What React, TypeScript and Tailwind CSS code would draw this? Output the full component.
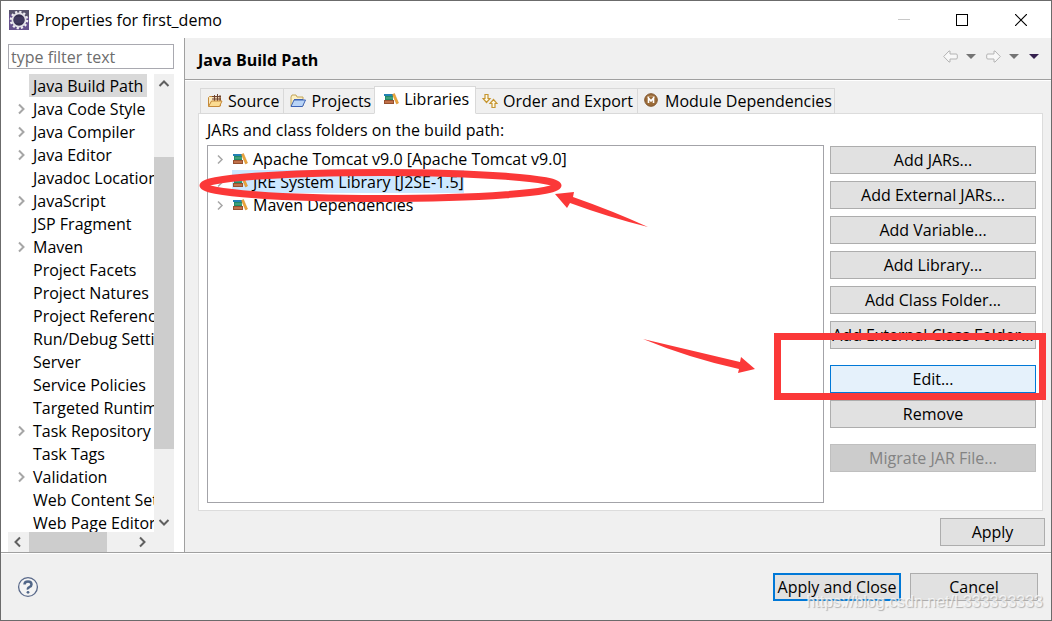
import { useState, type ReactNode } from 'react'

const categories = [
  { name: 'Java Build Path', expandable: false },
  { name: 'Java Code Style', expandable: true },
  { name: 'Java Compiler', expandable: true },
  { name: 'Java Editor', expandable: true },
  { name: 'Javadoc Location', expandable: false },
  { name: 'JavaScript', expandable: true },
  { name: 'JSP Fragment', expandable: false },
  { name: 'Maven', expandable: true },
  { name: 'Project Facets', expandable: false },
  { name: 'Project Natures', expandable: false },
  { name: 'Project References', expandable: false },
  { name: 'Run/Debug Settings', expandable: false },
  { name: 'Server', expandable: false },
  { name: 'Service Policies', expandable: false },
  { name: 'Targeted Runtimes', expandable: false },
  { name: 'Task Repository', expandable: true },
  { name: 'Task Tags', expandable: false },
  { name: 'Validation', expandable: true },
  { name: 'Web Content Settings', expandable: false },
  { name: 'Web Page Editor', expandable: false },
]

const libraries = [
  'Apache Tomcat v9.0 [Apache Tomcat v9.0]',
  'JRE System Library [J2SE-1.5]',
  'Maven Dependencies',
]

const tabs = [
  { id: 'source', name: 'Source', icon: <SourceIcon /> },
  { id: 'projects', name: 'Projects', icon: <ProjectsIcon /> },
  { id: 'libraries', name: 'Libraries', icon: <LibraryIcon /> },
  { id: 'order', name: 'Order and Export', icon: <OrderIcon /> },
  { id: 'modules', name: 'Module Dependencies', icon: <ModuleIcon /> },
]

export default function App() {
  return (
    <div className="relative flex h-screen flex-col border border-[#6b6b6b] bg-[#f0f0f0] font-['Open_Sans','Noto_Sans',sans-serif] text-[16px] leading-5 text-black">
      <TitleBar />
      <div className="flex min-h-0 flex-1 border-b border-[#a0a0a0]">
        <Sidebar />
        <main className="flex min-w-0 flex-1 flex-col border-l border-[#a0a0a0]">
          <PageHeader />
          <BuildPath />
          <div className="flex justify-end px-1.5 pt-[7px] pb-1.5">
            <PushButton className="w-[105px]">Apply</PushButton>
          </div>
        </main>
      </div>
      <Footer />
    </div>
  )
}

function TitleBar() {
  return (
    <header className="flex h-[37px] shrink-0 items-center bg-white pl-2">
      <EclipseIcon />
      <h1 className="ml-1.5 flex-1">Properties for first_demo</h1>
      <div className="flex">
        <button aria-label="Minimize" disabled className="flex h-9 w-[58px] items-center justify-center">
          <svg width="12" height="12" shapeRendering="crispEdges">
            <path d="M0 5.5h12" stroke="#c8c8c8" />
          </svg>
        </button>
        <button aria-label="Maximize" className="flex h-9 w-[58px] items-center justify-center">
          <svg width="12" height="12" shapeRendering="crispEdges">
            <rect x=".5" y=".5" width="11" height="11" fill="none" stroke="#000" />
          </svg>
        </button>
        <button aria-label="Close" className="flex h-9 w-[60px] items-center justify-center">
          <svg width="12" height="12">
            <path d="M0 0l12 12M12 0L0 12" stroke="#000" strokeWidth="1.2" />
          </svg>
        </button>
      </div>
    </header>
  )
}

function Sidebar() {
  const [selected, setSelected] = useState('Java Build Path')

  return (
    <aside className="flex w-[183px] shrink-0 flex-col bg-white pt-1.5 pr-2.5 pl-[7px]">
      <input
        type="text"
        aria-label="Filter"
        placeholder="type filter text"
        className="h-[25px] w-full border border-[#a9a9b0] px-0.5 outline-none placeholder:text-[#6d6d6d]"
      />
      <div className="mt-[5px] flex min-h-0 flex-1">
        <ul className="min-w-0 flex-1 overflow-hidden">
          {categories.map((item) => (
            <li key={item.name} className="flex h-[23px] items-center whitespace-nowrap">
              <span className="flex w-[21px] shrink-0 justify-center pl-1">
                {item.expandable && <Chevron className="text-[#a6a6a6]" />}
              </span>
              <button
                onClick={() => setSelected(item.name)}
                className={`h-[23px] px-1 ${selected === item.name ? 'bg-[#d9d9d9]' : ''}`}
              >
                {item.name}
              </button>
            </li>
          ))}
        </ul>
        <div className="flex w-5 flex-col bg-[#f0f0f0]">
          <button aria-label="Scroll up" className="flex h-5 items-center justify-center">
            <Chevron className="-rotate-90 text-[#606060]" />
          </button>
          <div className="flex flex-1 flex-col">
            <div className="grow-[15]" />
            <div className="grow-[70] bg-[#cdcdcd]" />
            <div className="grow-[15]" />
          </div>
          <button aria-label="Scroll down" className="flex h-5 items-center justify-center">
            <Chevron className="rotate-90 text-[#606060]" />
          </button>
        </div>
      </div>
      <div className="flex h-5 shrink-0 bg-[#f0f0f0] pr-[22px]">
        <button aria-label="Scroll left" className="flex w-5 items-center justify-center">
          <Chevron className="rotate-180 text-[#606060]" />
        </button>
        <div className="flex-1">
          <div className="ml-px h-full w-3/4 bg-[#cdcdcd]" />
        </div>
        <button aria-label="Scroll right" className="flex w-5 items-center justify-center">
          <Chevron className="text-[#606060]" />
        </button>
      </div>
    </aside>
  )
}

function PageHeader() {
  return (
    <div className="flex h-[42px] shrink-0 items-center border-b border-[#a0a0a0] pr-3 pl-[13px] shadow-[0_1px_0_#fff]">
      <h2 className="flex-1 pt-0.5 font-bold">Java Build Path</h2>
      <div className="flex items-center pb-1">
        <button aria-label="Back" disabled><HistoryArrow /></button>
        <button aria-label="Back history" className="ml-2"><Caret color="#747474" /></button>
        <button aria-label="Forward" disabled className="ml-2.5"><HistoryArrow className="rotate-180" /></button>
        <button aria-label="Forward history" className="ml-2"><Caret color="#747474" /></button>
        <button aria-label="Menu" className="ml-2.5"><Caret color="#35204f" /></button>
      </div>
    </div>
  )
}

function BuildPath() {
  const [activeTab, setActiveTab] = useState('libraries')
  const [selected, setSelected] = useState(libraries[1])

  return (
    <section className="flex min-h-0 flex-1 flex-col pt-1.5 pr-2 pl-[13px]">
      <div role="tablist" className="z-10 -mb-px flex h-7 items-end pl-0.5">
        {tabs.map((tab) => (
          <button
            key={tab.id}
            role="tab"
            aria-selected={activeTab === tab.id}
            onClick={() => setActiveTab(tab.id)}
            className={`flex items-center border border-[#d9d9d9] whitespace-nowrap ${
              activeTab === tab.id
                ? 'z-10 -mx-px h-7 border-b-white bg-white pr-1.5 pb-0.5 pl-2'
                : 'h-[26px] border-r-0 bg-[#f0f0f0] pr-1 pl-1.5 last:border-r last:pr-0.5'
            }`}
          >
            {tab.icon}
            <span className="ml-[5px]">{tab.name}</span>
          </button>
        ))}
      </div>
      <div className="flex min-h-0 flex-1 flex-col border border-[#dcdcdc] bg-white pt-1.5 pr-1.5 pb-[7px] pl-2">
        <p>JARs and class folders on the build path:</p>
        <div className="mt-[5px] flex min-h-0 flex-1 gap-1.5">
          <div className="relative min-w-0 flex-1 border border-[#a3a3a8] pt-px">
            <ul>
              {libraries.map((lib) => (
                <li key={lib} className="flex h-[23px] items-center pl-1.5">
                  <Chevron thin className="text-[#a6a6a6]" />
                  <button
                    onClick={() => setSelected(lib)}
                    className={`ml-1.5 flex h-[23px] items-center ${selected === lib ? 'bg-[#cce8ff]' : ''}`}
                  >
                    <LibraryIcon />
                    <span className="ml-[5px]">{lib}</span>
                  </button>
                </li>
              ))}
            </ul>
            <LibraryMark />
          </div>
          <div className="flex w-[206px] shrink-0 flex-col gap-[7px] pt-px">
            <PushButton>Add JARs...</PushButton>
            <PushButton>Add External JARs...</PushButton>
            <PushButton>Add Variable...</PushButton>
            <PushButton>Add Library...</PushButton>
            <PushButton>Add Class Folder...</PushButton>
            <PushButton>Add External Class Folder...</PushButton>
            <div className="relative mt-[9px] flex flex-col">
              <button className="h-7 border border-[#0078d7] bg-[#e5f1fb]">Edit...</button>
              <div className="pointer-events-none absolute -inset-x-14 -top-8 -right-2.5 -bottom-[7px] border-[7px] border-[#fb3838]" />
            </div>
            <PushButton>Remove</PushButton>
            <button disabled className="mt-[9px] h-7 border border-[#bfbfbf] bg-[#cccccc] text-[#838383]">
              Migrate JAR File...
            </button>
          </div>
        </div>
      </div>
    </section>
  )
}

function Footer() {
  return (
    <footer className="relative flex h-[67px] shrink-0 items-center border-t border-white pr-[13px] pl-4">
      <button aria-label="Help">
        <HelpIcon />
      </button>
      <div className="ml-auto flex gap-[9px]">
        <button className="h-7 w-32 border-2 border-[#0078d7] bg-[#e1e1e1] whitespace-nowrap">Apply and Close</button>
        <PushButton className="w-32">Cancel</PushButton>
      </div>
      <span className="pointer-events-none absolute right-2 bottom-1.5 font-['Liberation_Sans',sans-serif] text-base text-white/70 [text-shadow:1px_1px_1px_#b0b0b0]">
        https://blog.csdn.net/L333333333
      </span>
    </footer>
  )
}

function PushButton({ className = '', children }: { className?: string; children: ReactNode }) {
  return (
    <button className={`h-7 border border-[#adadad] bg-[#e1e1e1] whitespace-nowrap ${className}`}>{children}</button>
  )
}

// Red ellipse round the JRE entry, with one arrow to it and one to the Edit button
function LibraryMark() {
  return (
    <svg className="pointer-events-none absolute top-0 left-0 overflow-visible" width="560" height="240">
      <ellipse cx="172.500" cy="39.500" rx="177.500" ry="13" fill="none" stroke="#fb3838" strokeWidth="7" />
      <path d="M347 48l19-2-1 5q40 14 75 30q-40-10-78-24l-3 5z" fill="#fb3838" />
      <path d="M435 193l97 23 1-5 14 12-17 4 1-4q-50-11-96-30z" fill="#fb3838" />
    </svg>
  )
}

function Chevron({ className = '', thin = false }: { className?: string; thin?: boolean }) {
  return (
    <svg className={className} width="12" height="12" viewBox="0 0 12 12" fill="none">
      <path d={thin ? 'M4 2.5L8 6.5L4 10.5' : 'M4 1.5L8.5 6L4 10.5'} stroke="currentColor" strokeWidth={thin ? 1.5 : 2} />
    </svg>
  )
}

function Caret({ color }: { color: string }) {
  return (
    <svg width="10" height="5">
      <path d="M0 0h10L5 5z" fill={color} />
    </svg>
  )
}

function HistoryArrow({ className = '' }: { className?: string }) {
  return (
    <svg className={className} width="15" height="13" viewBox="0 0 15 13">
      <path
        d="M.7 6.5L6 1h1v3h6q1.300 0 1.300 1v3q0 1-1.300 1H7v3H6z"
        fill="#f8f8f8"
        stroke="#b4b4b4"
        strokeLinejoin="round"
      />
    </svg>
  )
}

function EclipseIcon() {
  return (
    <svg width="20" height="20" viewBox="0 0 20 20">
      <rect width="20" height="20" fill="#65518c" />
      <path d="M0 0h20v7L0 4z" fill="#57536c" />
      <circle cx="10" cy="10" r="8" fill="none" stroke="#efedf2" strokeWidth="2.500" strokeDasharray="2.200 1.990" />
      <circle cx="10" cy="10" r="6.600" fill="#352f50" stroke="#e4e2e8" strokeWidth="1.800" />
      <path d="M5 8h10M4.500 10h11M5 12h10" stroke="#564f78" strokeWidth=".7" />
    </svg>
  )
}

function SourceIcon() {
  return (
    <svg width="16" height="16" viewBox="0 0 16 16">
      <path d="M1.500 13V4.500l1-1h3l1 1h7v8.500z" fill="#fbe9bd" stroke="#c58a3a" />
      <rect x="6" y="3" width="7" height="5" fill="#ecd3b4" />
      <path d="M7.500 2v6M10.500 1v7M5 3.500h9M5 6h9M13 2v6" stroke="#70452f" />
      <path d="M1.500 13.500L4.500 8H15l-2.500 5.500z" fill="#fbdc92" stroke="#c58a3a" />
    </svg>
  )
}

function ProjectsIcon() {
  return (
    <svg width="16" height="16" viewBox="0 0 16 16">
      <path d="M1 13V4l1-2h4l1 2h6v9z" fill="#fcf0c4" stroke="#c2a458" />
      <path d="M1 13.500L4 7h11.500L12.500 13.500z" fill="#b9d4f6" stroke="#3d62b4" />
      <path d="M4 6.500h9" stroke="#3d62b4" />
    </svg>
  )
}

function LibraryIcon() {
  return (
    <svg className="shrink-0" width="16" height="16" viewBox="0 0 16 16">
      <rect x="1" y="3" width="9" height="2" fill="#2381b4" />
      <rect x="2" y="5" width="8" height="4" fill="#218c68" />
      <path d="M3 7h7" stroke="#8fc9a4" strokeWidth=".6" />
      <rect x="1.500" y="9.500" width="9" height="3" fill="#c0714a" stroke="#96502f" />
      <path d="M9.500 3.500l2-1 4 9.500-2 1z" fill="#eda63a" stroke="#cf8629" strokeWidth=".5" />
    </svg>
  )
}

function OrderIcon() {
  return (
    <svg width="16" height="16" viewBox="0 0 16 16" fill="#fffae5" stroke="#c69632" strokeWidth="1.200">
      <path d="M3 1.500h3v4h2L4.500 9.500L1 5.500h2z" />
      <path d="M10 14.500h3v-4h2L11.500 6.500L8 10.500h2z" />
    </svg>
  )
}

function ModuleIcon() {
  return (
    <svg width="16" height="16" viewBox="0 0 16 16">
      <circle cx="7" cy="7" r="6.300" fill="#9b6b38" stroke="#81552c" />
      <path d="M3 5a5 5 0 0 1 8 0" stroke="#c39b70" fill="none" />
      <path d="M4.500 10V5L7 8l2.500-3v5" fill="none" stroke="#fff" strokeWidth="1.600" />
    </svg>
  )
}

function HelpIcon() {
  return (
    <svg width="22" height="22" viewBox="0 0 22 22">
      <circle cx="11" cy="11" r="9.400" fill="#f4f4f4" stroke="#59698a" strokeWidth="1.300" />
      <path d="M7.500 8.500Q7.500 5.500 11 5.500T14.500 8.500Q14.500 10 12.500 11T11 13.500" fill="none" stroke="#526788" strokeWidth="2.500" />
      <circle cx="11" cy="16.300" r="1.400" fill="#526788" />
    </svg>
  )
}
